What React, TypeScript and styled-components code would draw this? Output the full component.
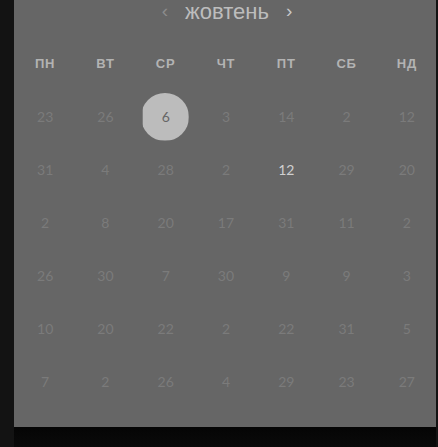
import * as React from "react";
import styled, { createGlobalStyle } from "styled-components";

const GlobalStyle = createGlobalStyle`
    html, body {
        margin: 0;
        padding: 0;
        background: #131313;
        font-family: "Lato", "Liberation Sans", sans-serif;
    }
`;

const weekdays = ["пн", "вт", "ср", "чт", "пт", "сб", "нд"];

const weeks: number[][] = [
    [23, 26, 6, 3, 14, 2, 12],
    [31, 4, 28, 2, 12, 29, 20],
    [2, 8, 20, 17, 31, 11, 2],
    [26, 30, 7, 30, 9, 9, 3],
    [10, 20, 22, 2, 22, 31, 5],
    [7, 2, 26, 4, 29, 23, 27],
];

const Page = styled.div`
    width: 438px;
    height: 447px;
    display: flex;
    flex-direction: column;
    padding-left: 14px;
    box-sizing: border-box;
    overflow: hidden;
`;

const Panel = styled.div`
    width: 422px;
    height: 427px;
    background: #666666;
    display: flex;
    flex-direction: column;
`;

const Footer = styled.div`
    width: 422px;
    flex: 1;
    background: linear-gradient(#050505, #0a0a0a);
`;

const Header = styled.div`
    height: 36px;
    padding-top: 1px;
    display: flex;
    justify-content: center;
    align-items: flex-start;
    gap: 14px;
    padding-left: 4px;
`;

const Month = styled.span`
    font-family: "Liberation Sans", "Arimo", sans-serif;
    font-size: 22px;
    line-height: 22px;
    color: #bdbdbd;
`;

const Arrow = styled.span<{ $dim?: boolean }>`
    font-family: "Liberation Sans", sans-serif;
    font-size: 19px;
    line-height: 20px;
    color: ${(p) => (p.$dim ? "#8c8c8c" : "#c8c8c8")};
    padding: 0 3px;
`;

const Grid = styled.div`
    display: grid;
    grid-template-columns: repeat(7, 1fr);
    grid-auto-rows: 53px;
`;

const Weekday = styled.div`
    display: flex;
    align-items: center;
    justify-content: center;
    font-family: "Liberation Sans", "DejaVu Sans", sans-serif;
    font-size: 13px;
    font-weight: bold;
    text-transform: uppercase;
    color: #b3b3b3;
    letter-spacing: 0.8px;
    padding-left: 2px;
`;

const Day = styled.div<{ $tone: "muted" | "bright" | "selected" }>`
    position: relative;
    display: flex;
    align-items: center;
    justify-content: center;
    font-size: 14px;
    padding-left: 2px;
    color: ${(p) =>
        p.$tone === "bright" ? "#d0d0d0" : p.$tone === "selected" ? "#666666" : "#7b7b7b"};
    &::before {
        content: "";
        display: ${(p) => (p.$tone === "selected" ? "block" : "none")};
        position: absolute;
        width: 48px;
        height: 48px;
        left: 50%;
        top: 50%;
        transform: translate(-50%, -50%);
        border-radius: 50%;
        background: #bcbcbc;
        clip-path: inset(0 0 0 2px);
    }
    > span {
        position: relative;
    }
`;

export default function App() {
    return (
        <Page>
            <GlobalStyle />
            <Panel>
                <Header>
                    <Arrow $dim>‹</Arrow>
                    <Month>жовтень</Month>
                    <Arrow>›</Arrow>
                </Header>
                <Grid>
                    {weekdays.map((w) => (
                        <Weekday key={w}>{w}</Weekday>
                    ))}
                    {weeks.map((week, r) =>
                        week.map((d, c) => {
                            const tone = r === 0 && c === 2 ? "selected" : r === 1 && c === 4 ? "bright" : "muted";
                            return (
                                <Day key={`${r}-${c}`} $tone={tone}>
                                    <span>{d}</span>
                                </Day>
                            );
                        })
                    )}
                </Grid>
            </Panel>
            <Footer />
        </Page>
    );
}
